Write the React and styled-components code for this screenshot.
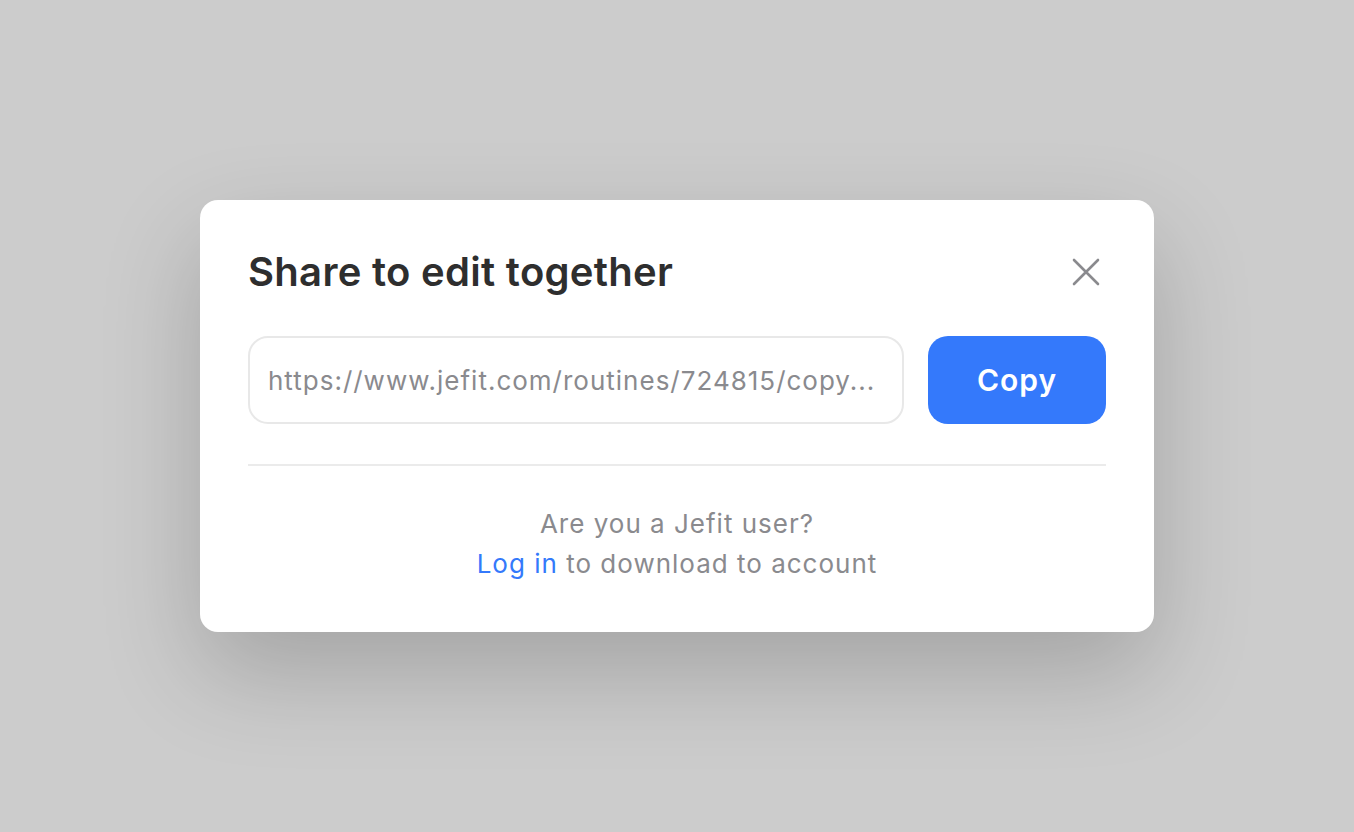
import React from "react";
import styled, { createGlobalStyle } from "styled-components";

const Global = createGlobalStyle`
  html, body { margin: 0; padding: 0; }
  body {
    background: #cccccc;
    font-family: Inter, "Noto Sans", sans-serif;
  }
`;

const Page = styled.div`
  width: 1354px;
  height: 832px;
  display: flex;
  align-items: center;
  justify-content: center;
`;

const Modal = styled.div`
  width: 954px;
  box-sizing: border-box;
  padding: 48px;
  background: #ffffff;
  border-radius: 18px;
  box-shadow: 0 40px 100px rgba(0, 0, 0, 0.2);
  display: flex;
  flex-direction: column;
`;

const Header = styled.div`
  display: flex;
  align-items: center;
  justify-content: space-between;
  height: 48px;
`;

const Title = styled.h2`
  margin: 0;
  font-size: 40px;
  line-height: 48px;
  font-weight: 600;
  color: #2e2e2e;
  letter-spacing: 0.3px;
`;

const CloseButton = styled.button`
  border: none;
  background: none;
  padding: 0;
  width: 32px;
  height: 32px;
  display: flex;
  align-items: center;
  justify-content: center;
  cursor: pointer;
  margin-right: 4px;
`;

const LinkRow = styled.div`
  display: flex;
  gap: 24px;
  margin-top: 40px;
`;

const UrlBox = styled.div`
  flex: 1;
  height: 88px;
  box-sizing: border-box;
  border: 2px solid #e8e8e8;
  border-radius: 20px;
  padding: 0 18px;
  display: flex;
  align-items: center;
  font-size: 26px;
  letter-spacing: 1px;
  color: #8a8a8e;
  white-space: nowrap;
  overflow: hidden;
`;

const CopyButton = styled.button`
  width: 178px;
  height: 88px;
  border: none;
  border-radius: 20px;
  background: #3479fb;
  color: #ffffff;
  font-family: Inter, "Noto Sans", sans-serif;
  font-size: 30px;
  font-weight: 600;
  letter-spacing: 1px;
  cursor: pointer;
`;

const Divider = styled.hr`
  margin: 40px 0 0;
  border: none;
  height: 2px;
  background: #ebebeb;
`;

const Footer = styled.p`
  margin: 38px 0 0;
  text-align: center;
  font-size: 26px;
  line-height: 40px;
  letter-spacing: 1px;
  color: #8a8a8e;
`;

const LoginLink = styled.a`
  color: #3479fb;
  text-decoration: none;
`;

export default function App() {
  return (
    <>
      <Global />
      <Page>
        <Modal>
          <Header>
            <Title>Share to edit together</Title>
            <CloseButton aria-label="Close">
              <svg width="28" height="28" viewBox="0 0 28 28">
                <path
                  d="M2 2 L26 26 M26 2 L2 26"
                  stroke="#8a8a8e"
                  strokeWidth="2.6"
                  strokeLinecap="round"
                  fill="none"
                />
              </svg>
            </CloseButton>
          </Header>
          <LinkRow>
            <UrlBox>https://www.jefit.com/routines/724815/copy...</UrlBox>
            <CopyButton>Copy</CopyButton>
          </LinkRow>
          <Divider />
          <Footer>
            Are you a Jefit user?
            <br />
            <LoginLink href="#">Log in</LoginLink> to download to account
          </Footer>
        </Modal>
      </Page>
    </>
  );
}
